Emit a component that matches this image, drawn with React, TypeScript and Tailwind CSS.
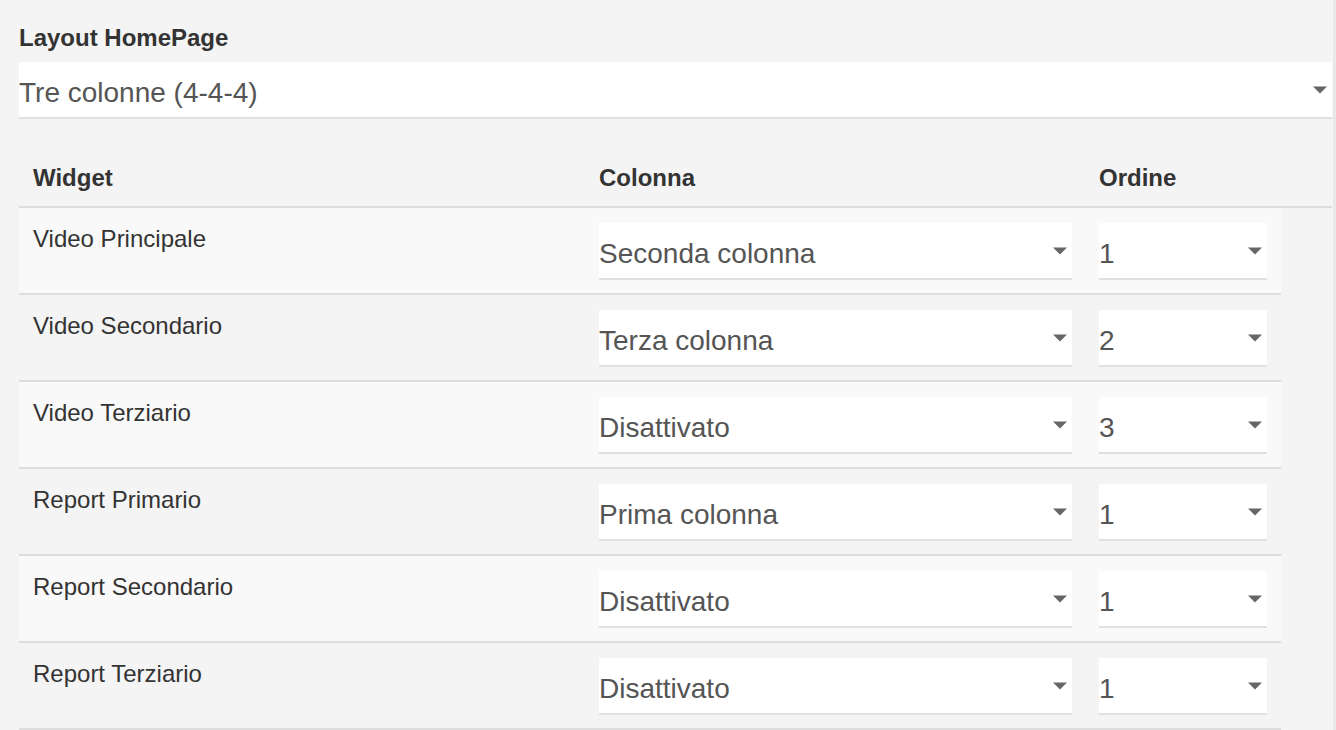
import React from 'react';

type Row = { widget: string; colonna: string; ordine: string };

const ROWS: Row[] = [
  { widget: 'Video Principale', colonna: 'Seconda colonna', ordine: '1' },
  { widget: 'Video Secondario', colonna: 'Terza colonna', ordine: '2' },
  { widget: 'Video Terziario', colonna: 'Disattivato', ordine: '3' },
  { widget: 'Report Primario', colonna: 'Prima colonna', ordine: '1' },
  { widget: 'Report Secondario', colonna: 'Disattivato', ordine: '1' },
  { widget: 'Report Terziario', colonna: 'Disattivato', ordine: '1' },
];

const Caret: React.FC = () => (
  <svg width="14" height="8" viewBox="0 0 14 8" className="shrink-0">
    <path d="M0 0.5 H14 L7 7.5 Z" fill="#666" />
  </svg>
);

const FakeSelect: React.FC<{ value: string; className?: string }> = ({ value, className = '' }) => (
  <div
    className={`flex h-[57px] items-center justify-between border-b-2 border-[#e0e0e0] bg-white pr-[5px] text-[28px] leading-none text-[#555] ${className}`}
  >
    <span className="pt-[6px]">{value}</span>
    <Caret />
  </div>
);

const App: React.FC = () => {
  return (
    <div
      className="min-h-screen w-[1336px] bg-[#f4f4f4] text-[#333]"
      style={{ fontFamily: '"Liberation Sans", Arial, Helvetica, sans-serif' }}
    >
      <div className="h-[730px] overflow-hidden border-r-[3px] border-[#e9e9e9] pl-[19px] pr-px pt-[21px]">
        <label className="block text-[24px] font-bold leading-[34px]">Layout HomePage</label>
        <FakeSelect value="Tre colonne (4-4-4)" className="mt-[7px]" />

        {/* intestazione tabella */}
        <div className="flex h-[89px] items-end border-b-2 border-[#dddddd] pb-[11px] text-[24px] font-bold leading-[34px]">
          <div className="w-[566px] pl-[14px]">Widget</div>
          <div className="w-[500px] pl-[14px]">Colonna</div>
          <div className="w-[196px] pl-[14px]">Ordine</div>
        </div>

        {ROWS.map((row, i) => (
          <div
            key={row.widget}
            className={`flex h-[87px] w-[1262px] border-b-2 border-[#dddddd] ${i % 2 === 0 ? 'bg-[#f9f9f9]' : 'bg-[#f4f4f4]'}`}
          >
            <div className="w-[566px] pl-[14px] pt-[14px] text-[24px] leading-[34px]">{row.widget}</div>
            <div className="w-[500px] pl-[14px] pr-[13px] pt-[15px]">
              <FakeSelect value={row.colonna} />
            </div>
            <div className="w-[196px] pl-[14px] pr-[14px] pt-[15px]">
              <FakeSelect value={row.ordine} />
            </div>
          </div>
        ))}
      </div>
    </div>
  );
};

export default App;
